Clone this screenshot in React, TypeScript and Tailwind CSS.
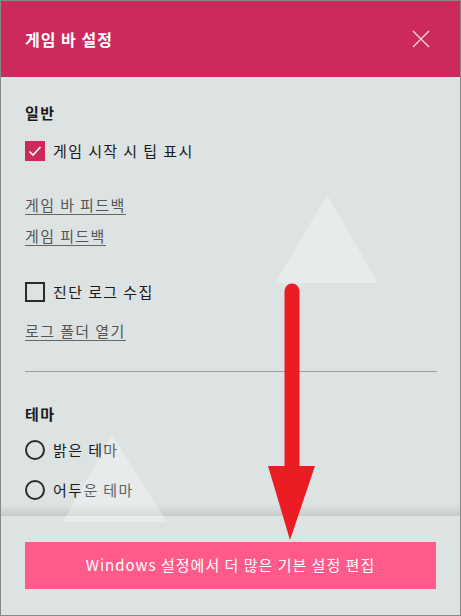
import React from "react";

const Checkbox: React.FC<{ checked?: boolean }> = ({ checked }) =>
  checked ? (
    <div className="w-5 h-5 bg-[#cc295c] flex items-center justify-center">
      <svg width="14" height="14" viewBox="0 0 14 14">
        <path d="M1.5 7.5 L5 11 L12.5 3" fill="none" stroke="#fff" strokeWidth="1.6" />
      </svg>
    </div>
  ) : (
    <div className="w-5 h-5 border-2 border-[#2b2b2b]"></div>
  );

const Radio = () => <div className="w-5 h-5 rounded-full border-2 border-[#2b2b2b]"></div>;

const LinkText: React.FC<{ children: React.ReactNode; className?: string }> = ({ children, className }) => (
  <div className={`flex ${className ?? ""}`}>
    <span className="h-5 leading-5 text-[15px] tracking-[1.4px] text-[#555] border-b border-[#666]">{children}</span>
  </div>
);

export default function App() {
  return (
    <div
      className="relative w-[461px] h-[616px] border border-[#888] flex flex-col overflow-hidden bg-[#dde3e3]"
      style={{ fontFamily: '"Noto Sans CJK KR", "Noto Sans", sans-serif' }}
    >
      <div className="h-[76px] shrink-0 bg-[#cc295c] flex items-center justify-between pl-6 pr-[30px]">
        <span className="text-white font-bold text-[16px] tracking-[1px]">게임 바 설정</span>
        <svg width="18" height="18" viewBox="0 0 18 18">
          <path d="M1 1 L17 17 M17 1 L1 17" stroke="#f3d4de" strokeWidth="1.4" />
        </svg>
      </div>

      <div className="relative h-[439px] shrink-0 pl-6 flex flex-col text-[#1a1a1a] tracking-[1.4px]">
        <div className="mt-[26px] h-5 leading-5 text-[15px] font-bold">일반</div>
        <div className="mt-[18px] flex items-center gap-2 h-5">
          <Checkbox checked />
          <span className="text-[15px]">게임 시작 시 팁 표시</span>
        </div>
        <LinkText className="mt-[34px]">게임 바 피드백</LinkText>
        <LinkText className="mt-[11px]">게임 피드백</LinkText>
        <div className="mt-[36px] flex items-center gap-2 h-5">
          <Checkbox />
          <span className="text-[15px]">진단 로그 수집</span>
        </div>
        <LinkText className="mt-[19px]">로그 폴더 열기</LinkText>
        <div className="mt-[30px] mr-[23px] h-px bg-[#9a9e9e]"></div>
        <div className="mt-[32px] h-5 leading-5 text-[15px] font-bold">테마</div>
        <div className="mt-[16px] flex items-center gap-2 h-5">
          <Radio />
          <span className="text-[15px]">밝은 테마</span>
        </div>
        <div className="mt-[20px] flex items-center gap-2 h-5">
          <Radio />
          <span className="text-[15px]">어두운 테마</span>
        </div>
        <div className="absolute left-0 right-0 bottom-0 h-[12px] bg-gradient-to-b from-[#dde3e3] to-[#c6cccc]"></div>
      </div>

      <div className="flex-1 px-6 pt-[26px]">
        <div className="h-[47px] bg-[#ff5a8a] flex items-center justify-center text-white text-[15px] tracking-[1px]">
          Windows 설정에서 더 많은 기본 설정 편집
        </div>
      </div>

      {/* watermark triangles and annotation arrow */}
      <svg className="absolute left-[-1px] top-[-1px] pointer-events-none" width="461" height="616">
        <polygon points="327,195 378,283 275,283" fill="#ffffff" fillOpacity="0.3" />
        <polygon points="112,435 167,522 63,522" fill="#ffffff" fillOpacity="0.3" />
        <line x1="292" y1="291" x2="292" y2="470" stroke="#ec1c24" strokeWidth="15" strokeLinecap="round" />
        <polygon points="268,466 315,466 290,540" fill="#ec1c24" />
      </svg>
    </div>
  );
}
